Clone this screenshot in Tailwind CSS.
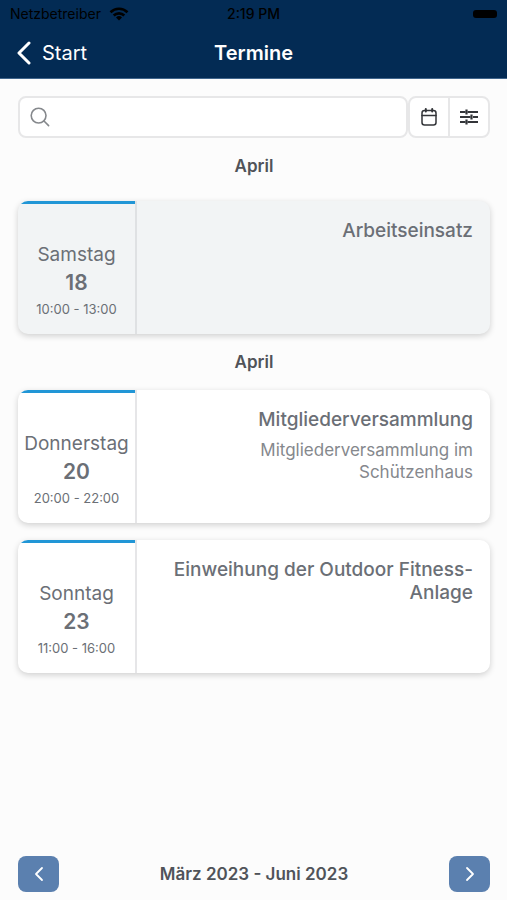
<!DOCTYPE html>
<html lang="de">
<head>
<meta charset="utf-8">
<meta name="viewport" content="width=device-width, initial-scale=1">
<title>Termine</title>
<script src="https://cdn.jsdelivr.net/npm/@tailwindcss/browser@4"></script>
</head>
<body class="flex min-h-screen flex-col bg-[#fcfcfc] font-['Inter','Liberation_Sans',sans-serif] text-[#6b6f76]">
<header class="border-b border-[#40658c] bg-[#032b54] pb-1.5">
  <div class="grid h-7 grid-cols-[1fr_auto_1fr] items-center px-2.5 text-sm text-black">
    <div class="flex items-center gap-2">
      <span>Netzbetreiber</span>
      <svg class="h-3.5 w-5" viewBox="0 0 20 14" fill="none" stroke="currentColor" stroke-width="2.6" aria-hidden="true">
        <path d="M1.500 5.200a12.200 12.200 0 0 1 17 0M4.700 8.500a7.600 7.600 0 0 1 10.600 0"/>
        <path d="M10 13.400 7 10.500a4.300 4.300 0 0 1 6 0z" fill="currentColor" stroke="none"/>
      </svg>
    </div>
    <span class="font-medium">2:19 PM</span>
    <div class="h-2 w-6 justify-self-end rounded-[3px] bg-black"></div>
  </div>
  <nav class="grid grid-cols-[1fr_auto_1fr] items-center px-4 pt-1.5 text-xl leading-[38px] text-white">
    <a href="#" class="flex items-center gap-2.5">
      <svg class="h-6 w-4" viewBox="0 0 16 24" fill="none" stroke="currentColor" stroke-width="3" stroke-linecap="round" stroke-linejoin="round" aria-hidden="true"><path d="M13 2 3 12l10 10"/></svg>
      Start
    </a>
    <h1 class="font-semibold">Termine</h1>
  </nav>
</header>

<main class="flex flex-1 flex-col pt-[17px] pr-[17px] pl-[18px]">
  <div class="flex h-[42px]">
    <label class="flex flex-1 items-center rounded-lg border-2 border-[#e7e7e8] bg-white pl-2.5">
      <svg class="size-5 text-[#85888c]" viewBox="0 0 20 20" fill="none" stroke="currentColor" stroke-width="1.6" stroke-linecap="round" aria-hidden="true"><circle cx="8.600" cy="8.600" r="7.400"/><path d="m14 14 4.600 4.600"/></svg>
      <input type="search" aria-label="Termine suchen" class="h-full min-w-0 flex-1 bg-transparent px-2 outline-none">
    </label>
    <div class="flex rounded-lg border-2 border-[#e7e7e8] bg-white text-[#333539]">
      <button type="button" aria-label="Kalender" class="flex w-10 items-center justify-center border-r-2 border-[#e7e7e8]">
        <svg class="h-5 w-4" viewBox="0 0 16 20" fill="none" stroke="currentColor" stroke-width="1.5" stroke-linecap="round" aria-hidden="true"><rect x="1" y="3.500" width="14" height="14.500" rx="2.500"/><path d="M1 8.500h14"/><path stroke-width="2" d="M4.800 2v2.600M11.200 2v2.600"/></svg>
      </button>
      <button type="button" aria-label="Filter" class="flex w-[38px] items-center justify-center">
        <svg class="h-4 w-[18px]" viewBox="0 0 18 16" fill="none" stroke="currentColor" stroke-width="1.900" aria-hidden="true"><path d="M0 3h5.500M7.500 3H18M0 8h10.500M13 8H18M0 13h5.500M7.500 13H18"/><path stroke-width="2.200" d="M6.500 .5v5M11.500 5.500v5M6.500 10.500v5"/></svg>
      </button>
    </div>
  </div>

  <h2 class="pt-4 pb-[23px] text-center text-[17px] leading-6 font-semibold text-[#505359]">April</h2>
  <article class="flex min-h-[133px] overflow-hidden rounded-[10px] bg-[#f2f4f5] shadow-[0_2px_6px_rgba(0,0,0,0.18)]">
    <div class="flex w-[119px] shrink-0 flex-col border-r-2 border-[#dfe1e3] text-center">
      <div class="h-[3px] bg-[#2196d6]"></div>
      <p class="pt-[37px] text-[19px] leading-7">Samstag</p>
      <p class="text-[21px] leading-7 font-semibold">18</p>
      <p class="text-[13px] leading-6">10:00 - 13:00</p>
    </div>
    <div class="flex-1 px-[17px] pt-[18px] text-right">
      <h3 class="text-[19px] leading-[23px] font-medium">Arbeitseinsatz</h3>
    </div>
  </article>

  <h2 class="py-4 text-center text-[17px] leading-6 font-semibold text-[#505359]">April</h2>
  <div class="flex flex-col gap-[17px]">
    <article class="flex min-h-[133px] overflow-hidden rounded-[10px] bg-white shadow-[0_2px_6px_rgba(0,0,0,0.18)]">
      <div class="flex w-[119px] shrink-0 flex-col border-r-2 border-[#e6e6e8] text-center">
        <div class="h-[3px] bg-[#2196d6]"></div>
        <p class="pt-[37px] text-[19px] leading-7">Donnerstag</p>
        <p class="text-[21px] leading-7 font-semibold">20</p>
        <p class="text-[13px] leading-6">20:00 - 22:00</p>
      </div>
      <div class="flex-1 px-[17px] pt-[18px] text-right">
        <h3 class="text-[19px] leading-[23px] font-medium">Mitgliederversammlung</h3>
        <p class="mt-2 ml-auto max-w-60 text-[17px] leading-[22px] text-[#85888d]">Mitgliederversammlung im Schützenhaus</p>
      </div>
    </article>
    <article class="flex min-h-[133px] overflow-hidden rounded-[10px] bg-white shadow-[0_2px_6px_rgba(0,0,0,0.18)]">
      <div class="flex w-[119px] shrink-0 flex-col border-r-2 border-[#e6e6e8] text-center">
        <div class="h-[3px] bg-[#2196d6]"></div>
        <p class="pt-[37px] text-[19px] leading-7">Sonntag</p>
        <p class="text-[21px] leading-7 font-semibold">23</p>
        <p class="text-[13px] leading-6">11:00 - 16:00</p>
      </div>
      <div class="flex-1 px-[17px] pt-[18px] text-right">
        <h3 class="text-[19px] leading-[23px] font-medium">Einweihung der Outdoor Fitness-Anlage</h3>
      </div>
    </article>
  </div>
</main>

<footer class="flex items-center justify-between pt-4 pr-[17px] pb-2 pl-[18px]">
  <button type="button" aria-label="Vorheriger Zeitraum" class="flex h-9 w-[41px] items-center justify-center rounded-lg bg-[#5b80af] text-white">
    <svg class="h-4 w-2.5" viewBox="0 0 10 16" fill="none" stroke="currentColor" stroke-width="1.800" stroke-linecap="round" stroke-linejoin="round" aria-hidden="true"><path d="M8 2 2 8l6 6"/></svg>
  </button>
  <p class="text-[17px] leading-6 font-semibold text-[#505359]">März 2023 - Juni 2023</p>
  <button type="button" aria-label="Nächster Zeitraum" class="flex h-9 w-[41px] items-center justify-center rounded-lg bg-[#5b80af] text-white">
    <svg class="h-4 w-2.5" viewBox="0 0 10 16" fill="none" stroke="currentColor" stroke-width="1.800" stroke-linecap="round" stroke-linejoin="round" aria-hidden="true"><path d="m2 2 6 6-6 6"/></svg>
  </button>
</footer>
</body>
</html>
